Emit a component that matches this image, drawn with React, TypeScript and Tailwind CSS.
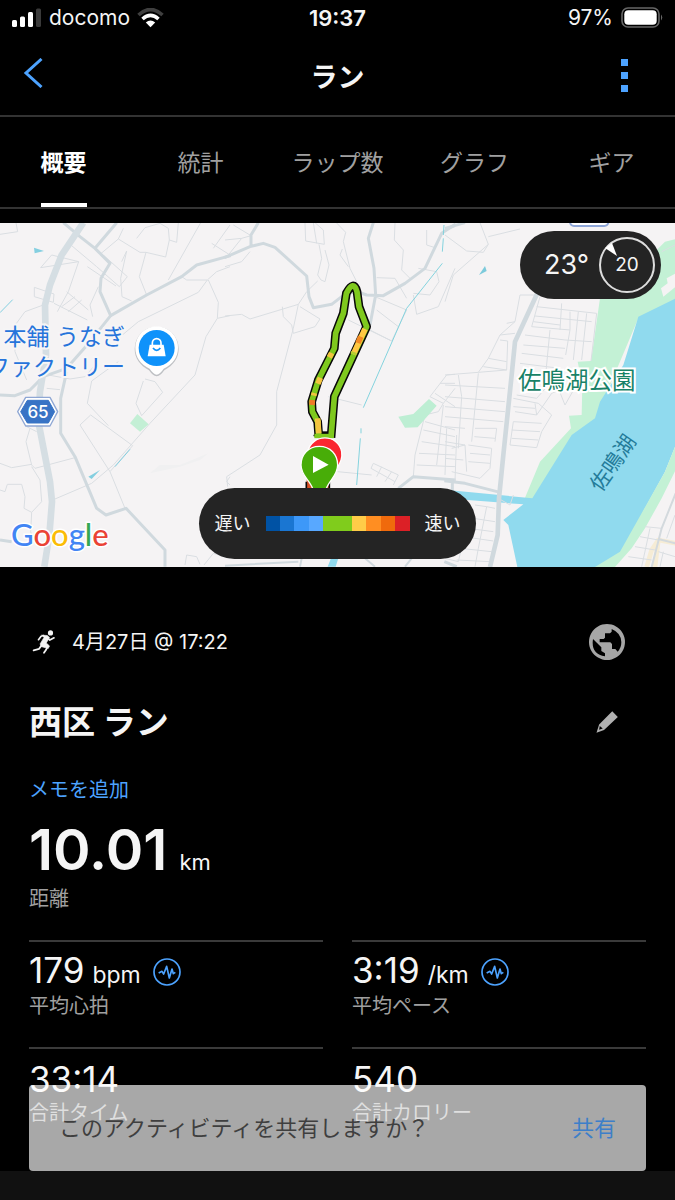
import React from "react";

const TABS = ["概要", "統計", "ラップ数", "グラフ", "ギア"];

const PACE_COLORS = [
  "bg-[#0052a4]",
  "bg-[#1a76d2]",
  "bg-[#3d98f8]",
  "bg-[#58a8ff]",
  "bg-[#80cc1c]",
  "bg-[#80cc1c]",
  "bg-[#ffcc48]",
  "bg-[#ff8e22]",
  "bg-[#f06a0c]",
  "bg-[#dc2026]",
];

function StatusBar() {
  return (
    <div className="grid h-9 grid-cols-3 items-center px-3 text-[21px] leading-6">
      <div className="flex items-center gap-[7px]">
        <svg className="h-5 w-[30px]" viewBox="0 0 30 20" aria-hidden="true">
          <rect x="0" y="12" width="5" height="7" rx="1.5" fill="#fff" />
          <rect x="8" y="8.500" width="5" height="10.500" rx="1.500" fill="#fff" />
          <rect x="16" y="4" width="5" height="15" rx="1.500" fill="#fff" />
          <rect x="24" y="0.500" width="5" height="18.500" rx="1.500" fill="#3a3a3a" />
        </svg>
        <span>docomo</span>
        <svg className="h-5 w-[27px]" viewBox="0 0 27 20" aria-hidden="true" fill="none">
          <path d="M1.500 7 Q13.500 -4 25.500 7" stroke="#3f3f3f" strokeWidth="3.600" />
          <path d="M5.500 11 Q13.500 3.800 21.500 11" stroke="#fff" strokeWidth="3.600" />
          <path d="M8.800 14.500 Q13.500 10.500 18.200 14.500 L13.500 19.300Z" fill="#fff" />
        </svg>
      </div>
      <div className="text-center text-[22px] font-semibold">19:37</div>
      <div className="flex items-center justify-end gap-2">
        <span>97%</span>
        <svg className="h-[22px] w-[42px]" viewBox="0 0 42 22" aria-hidden="true">
          <rect x="1" y="1" width="37" height="19" rx="6" fill="none" stroke="#666" strokeWidth="1.600" />
          <rect x="3.300" y="3.300" width="32.400" height="14.400" rx="4" fill="#fff" />
          <path d="M40 7.500 Q42.500 10.500 40 13.500Z" fill="#666" />
        </svg>
      </div>
    </div>
  );
}

function Header() {
  return (
    <header className="flex h-[81px] items-center justify-between border-b-2 border-[#333] px-[23px]">
      <button aria-label="戻る" className="flex h-10 w-10 items-start pt-[2px]">
        <svg className="h-[30px] w-5" viewBox="0 0 20 30" fill="none" aria-hidden="true">
          <path d="M18.500 1 L3 15 L18.500 29" stroke="#4da3ff" strokeWidth="3" />
        </svg>
      </button>
      <h1 className="pt-1 text-[27px] font-bold leading-8">ラン</h1>
      <button aria-label="メニュー" className="flex h-10 w-10 items-center justify-end pr-6">
        <svg className="h-[33px] w-[7px]" viewBox="0 0 7 33" aria-hidden="true" fill="#4da3ff">
          <rect width="7" height="7" />
          <rect y="13" width="7" height="7" />
          <rect y="26" width="7" height="7" />
        </svg>
      </button>
    </header>
  );
}

function Tabs() {
  return (
    <nav className="overflow-hidden border-b-2 border-[#333]" role="tablist">
      <div className="-mx-[5px] grid grid-cols-5">
        {TABS.map((t, i) => (
          <div key={t} className="flex justify-center">
            <button
              role="tab"
              aria-selected={i === 0}
              className={
                i === 0
                  ? "h-[90px] whitespace-nowrap border-b-4 border-[#fff] pt-[6px] text-[23px] font-bold text-white"
                  : "h-[90px] whitespace-nowrap border-b-4 border-transparent pt-[6px] text-[23px] text-[#a0a0a0]"
              }
            >
              {t}
            </button>
          </div>
        ))}
      </div>
    </nav>
  );
}

function MapWest() {
  return (
    <g transform="translate(0 -8) scale(0.33333)" fill="none" strokeLinejoin="round">
      <g stroke="#dadee2" strokeWidth="3">
        <path d="M0 58 L53 50 48 23 M215 92 L290 155 358 215 382 185 312 122 M236 140 L205 230 172 290 M236 140 L155 120 122 158 236 140 M262 155 L348 213 M300 118 L355 72 420 112 438 112 M355 72 L370 40 M365 140 L380 108 M380 108 L362 190 366 245 395 258 M438 112 L418 185 440 240 M438 112 L497 126 508 75 M410 70 L435 38 480 25 505 40 508 75 530 82 535 23 M602 23 L505 195 M545 185 L560 195 622 195 650 170 690 155 M625 195 L655 262 652 310 690 302 M652 310 L618 365 585 480 450 625 340 750 275 805 165 852 M622 195 L595 232 415 320 355 370 M355 440 L275 498 262 565 325 632" />
        <path d="M103 217 L162 237 160 262 103 245Z M162 265 L262 315 M200 230 L265 285 M225 245 L185 275 M245 255 L205 290 M295 215 L270 270 278 305 M130 270 L75 290 42 335 45 410 80 495 M145 480 L210 492 255 485 285 450 M140 520 L180 524 M90 640 L78 680 95 750 105 760 225 728 M110 650 L80 635 M0 745 L35 758 95 748 M0 825 L15 830 22 808 65 808 75 845 72 880 95 892 125 860 120 795 95 755 M95 892 L92 950 100 975 M240 630 L272 600 398 692 330 770 M240 630 L330 770 375 880 M435 492 L465 500 488 532 425 602 408 565 430 498 M640 100 L690 30 M635 85 L690 120 M555 1050 L560 1020 590 1025 600 1048 M612 1050 L640 1015 690 1030 M690 785 L680 800 690 810" />
      </g>
      <path d="M450 775 L480 750 540 750 625 715 600 735 540 755Z" fill="#f0f0f1" />
      <path d="M390 625 L412 597 446 628 420 650Z" fill="#c3efd5" />
      <g stroke="#d0d9de" strokeWidth="9">
        <path d="M190 23 L240 65 285 100 330 145 303 190 300 230 332 302 440 240 545 185 590 150 692 122" />
        <path d="M350 23 L285 100 M332 302 L270 380 200 460 130 485 90 525 45 542 0 540 M200 470 L182 550 182 655 225 725 265 820 290 880 318 900 378 880 495 1005 495 1055 M0 975 L35 980" />
      </g>
      <path d="M250 23 L185 120 150 210 135 270 138 420 120 530 115 620 150 800 156 860 148 960 133 1055" stroke="#d5dee3" strokeWidth="20" />
      <g fill="#84cfe0">
        <path d="M102 98 L132 108 104 115Z M265 785 L300 765 275 792Z" />
        <path d="M0 293 L38 254 M345 755 L390 703" stroke="#84cfe0" strokeWidth="3" />
      </g>
    </g>
  );
}

const ROUTE =
  "M277 668 L281 658 278 620 262 590 260 560 280 495 328 400 332 355 355 295 364 235 Q386 193 396 230 L402 275 425 335 328 545 318 668";

function MapCenter() {
  return (
    <g transform="translate(225 -8) scale(0.33333)" fill="none" strokeLinejoin="round">
      <g stroke="#dadee2" strokeWidth="3">
        <path d="M0 75 L50 70 78 62 25 30 M0 155 L50 140 75 110 M50 70 L10 120 M240 23 L242 78 298 88 295 45 270 23 M265 23 L275 85 M282 88 L290 130 278 180 288 195 300 200 312 150 300 105 M334 23 L362 52 355 80 375 160 395 200 M352 102 L345 120 370 155 M0 303 L50 298 75 312 220 268 205 340 155 530 155 630 105 720 5 785 8 815 M220 268 L245 230 278 198 M172 275 L175 305 200 330 205 355 270 335 285 312 225 275 M510 23 L508 75 535 105 530 165 555 190 M455 188 L510 190 545 250 M455 285 L520 335 M450 245 L545 285 M370 315 L500 378 M435 345 L500 378 545 285 M310 545 L410 570 M565 235 L615 240 642 200 635 170 580 160 M565 240 L575 298 640 275 690 160 M605 45 L605 90 630 98 655 50 690 35" />
        <path d="M338 770 L440 780 M438 760 L445 745 520 780 505 810 M438 760 L510 800 M470 755 L455 785 M500 770 L480 800 M690 478 L665 480 615 545 655 565 690 520 M645 505 L690 505 M630 535 L690 575 M655 565 L640 590 600 600 570 720 565 785 M600 620 L690 645 M595 645 L690 665 M590 680 L690 695 M582 715 L690 720 M575 750 L690 755 M655 570 L635 750 M665 640 L660 780" />
      </g>
      <g stroke="#d0d9de" strokeWidth="9">
        <path d="M-2 128 L75 95 115 85 150 97 245 183 252 245 265 278 320 268 350 245 390 228 425 240 475 242 540 205 600 160 650 55 692 27 M445 23 L430 70 447 160 452 240 435 330 M100 23 L78 60 78 95 M520 820 L565 785 692 795" />
        <path d="M0 1052 L220 1040 M230 1030 L225 1055 M420 1030 L450 1055 M540 1055 L560 1030" strokeWidth="6" />
      </g>
      <path d="M318 1030 L340 1030 332 1055 308 1055Z" fill="#90daee" />
      <path d="M657 30 L655 60 M655 70 L652 110 M652 145 L545 280 415 578 M408 640 L408 655 M406 670 L395 810" stroke="#84d3de" strokeWidth="3" />
      <path d="M520 605 L565 597 612 552 635 572 578 637 540 638Z" fill="#bdeed3" />
      <path d="M245 820 V790 H315 V820" fill="#d95026" />
      <path d="M244 800 V820 M313 800 V820" stroke="#080808" strokeWidth="5" />
      <path d={ROUTE} stroke="#080808" strokeWidth="26" />
      <path d="M285 653 H315" stroke="#080808" strokeWidth="8" />
      <path d={ROUTE} stroke="#7fc91e" strokeWidth="17" />
      <path d="M268 663 H326" stroke="#7fc91e" strokeWidth="13" />
      <g strokeWidth="17">
        <path d="M420 342 L385 418" stroke="#ffc843" />
        <path d="M407 365 L399 384" stroke="#f28a25" />
        <path d="M387 411 L384 418 M276 613 L280 625" stroke="#b7cf31" />
        <path d="M320 414 L313 427 M286 488 L279 506 M268 534 L266 542 M278 610 L281 655" stroke="#f3c440" />
        <path d="M262 555 L261 570" stroke="#ef7928" />
      </g>
      <path d="M248 710 C260 655 340 655 350 710 Q354 735 335 760 L280 760Z" fill="#fa2630" stroke="#fff" strokeWidth="4" />
      <path d="M283 694 C250 694 228 718 228 750 C228 782 254 795 263 821 H304 C312 796 338 782 338 750 C338 718 316 694 283 694Z" fill="#48ad08" stroke="#fff" strokeWidth="4" />
      <path d="M264 723 V774 L311 749Z" fill="#fff" />
    </g>
  );
}

function MapEast() {
  return (
    <g transform="translate(445 -8) scale(0.33333)" fill="none" strokeLinejoin="round">
      <path d="M660 80 L692 72 692 255 580 310 470 570 455 615 380 670 265 860 240 848 285 740 378 640 372 602 410 600 412 510 398 440 438 438 465 250 560 180Z" fill="#c3f1d5" />
      <path d="M692 175 L665 190 668 205 648 220 655 245 692 215Z" fill="#f5f3f4" />
      <path d="M692 250 L580 305 535 450 465 560 450 610 380 660 262 850 0 824 0 850 235 868 175 915 190 930 205 1000 217 1056 455 1056 530 1020 600 880 660 770 692 690Z" fill="#90daee" />
      <path d="M692 690 L660 770 525 1010 450 1056 510 1056 560 1000 600 940 650 850 692 765Z" fill="#c3f1d5" />
      <path d="M605 1056 L620 1005 640 975 M630 1056 L640 975 692 985" stroke="#f6ecd5" strokeWidth="14" />
      <g stroke="#dadee2" strokeWidth="3">
        <path d="M0 60 L65 108 115 112 130 88 105 23 M130 88 L25 180 0 260 M130 65 L225 42 M650 110 L690 90 M270 240 L225 240 210 320 185 325 M210 320 L165 360 130 430 100 472 0 480 M165 360 L210 355 M165 375 L188 378 185 465 100 472 M285 245 L260 335 375 345 M275 275 L455 295 M270 303 L440 320 M265 320 L345 330 M350 265 L345 345 M400 290 L385 435 M425 295 L410 435 M375 290 L375 345 362 420 M240 360 L360 375 M235 390 L360 400 M230 415 L355 430 M225 445 L345 460 M225 475 L330 485 M455 295 L438 438 M440 380 L360 375 M315 345 L300 500 M130 430 L185 440 M115 455 L185 465 M100 475 L80 680 M40 480 L50 545 40 700 M0 510 L180 520 M0 545 L180 560 M0 575 L180 590 M0 605 L175 620 M0 635 L60 640 M0 680 L60 690 M70 690 L140 700 135 760 105 790 20 770 M75 715 L135 720 M70 740 L135 745 M90 640 L155 640 150 680 M88 665 L150 670 M20 700 L60 690 65 770 M0 730 L55 735 M35 660 L30 800" />
        <path d="M205 550 L280 565 320 600 290 650 275 698 195 690 205 620 290 625 M200 645 L285 650 M200 670 L280 675 M210 590 L275 600 320 535 400 500 M215 540 L275 550 310 510 M205 575 L270 580 M275 600 L270 565 M340 520 L360 570 400 500 M90 870 L125 875 150 880 M125 875 L100 1000 90 1055 M85 910 L150 920 M70 940 L145 950 M55 965 L145 978 M45 1000 L140 1010 M35 1035 L135 1040 M0 1030 L40 1040 60 955 M160 850 L195 870 205 840 M600 935 L650 940 M585 965 L640 975 M570 995 L630 1005 M550 1025 L620 1035 M615 940 L590 1055 M690 900 L665 970 M655 1010 L645 1055 M640 1010 L690 1025" />
      </g>
      <path d="M277 235 L210 380 200 480 175 720 162 850 158 960 135 1056" stroke="#d0d9de" strokeWidth="14" />
      <path d="M-2 797 L60 805 165 832 M22 797 V825 M0 40 L60 23 M-2 1040 L35 1055" stroke="#d0d9de" strokeWidth="9" />
      <path d="M692 835 L650 940 620 1056 M640 972 L692 985" stroke="#d3d9dd" strokeWidth="6" />
      <path d="M102 180 L120 153 125 168Z" fill="#7ccadb" />
      <rect x="375" y="-10" width="115" height="43" rx="12" fill="#fff" stroke="#8ea6d8" strokeWidth="6" />
    </g>
  );
}

function MapLabels() {
  return (
    <g>
      <g fill="#2674db" stroke="#f6f5f6" strokeWidth="4" paintOrder="stroke" fontSize="23">
        <text x="125" y="122" textAnchor="end">本舗 うなぎ</text>
        <text x="125" y="152" textAnchor="end">ファクトリー</text>
      </g>
      <g fill="#188267" paintOrder="stroke" fontSize="24">
        <text x="518" y="166" stroke="#fff" strokeWidth="4" fontSize="23.500">佐鳴湖公園</text>
        <text transform="translate(601 270) rotate(-55)" fill="#247c9a" fontSize="21">佐鳴湖</text>
      </g>
      <g transform="translate(0 -8) scale(0.33333)">
        <path d="M470 484 Q458 482 447 466 C420 450 404 430 404 401 A66 66 0 0 1 536 401 C536 430 520 450 493 466 Q482 482 470 484Z" fill="#9a9ea3" opacity="0.600" />
        <path d="M470 479 Q460 478 449 461 C422 448 406 427 406 398 A64 64 0 0 1 534 398 C534 427 518 448 491 461 Q480 478 470 479Z" fill="#fff" />
        <circle cx="470" cy="399" r="54" fill="#0f92fa" />
        <path d="M449 389 H491 L497 424 H443Z" fill="#fff" />
        <path d="M457 391 V384 A13 13 0 0 1 483 384 V391" fill="none" stroke="#fff" strokeWidth="5" />
        <path d="M459 399 Q470 413 481 399" fill="none" stroke="#0f92fa" strokeWidth="5" />
        <path d="M77 547 H150 L173 590 150 633 H77 L53 590Z" fill="#fff" stroke="#8fa7d4" strokeWidth="4" strokeLinejoin="round" />
        <path d="M82 556 H145 L164 590 145 624 H82 L62 590Z" fill="#3873c5" stroke="#3873c5" strokeWidth="3" strokeLinejoin="round" />
      </g>
      <text x="38" y="195" textAnchor="middle" fill="#fff" fontSize="17" fontWeight="500">65</text>
      <text x="11" y="323" fontSize="31" fontWeight="500" stroke="#fff" strokeWidth="3" paintOrder="stroke" className="font-[Lato,sans-serif]">
        <tspan fill="#4285f4">G</tspan>
        <tspan fill="#ea4335">o</tspan>
        <tspan fill="#fbbc05">o</tspan>
        <tspan fill="#4285f4">g</tspan>
        <tspan fill="#34a853">l</tspan>
        <tspan fill="#ea4335">e</tspan>
      </text>
    </g>
  );
}

function RouteMap() {
  return (
    <section className="relative mt-[14px] h-[344px] overflow-hidden bg-[#f5f3f4]">
      <svg className="h-full w-full" viewBox="0 0 675 344" preserveAspectRatio="xMidYMid slice" role="img" aria-label="ルート">
        <MapWest />
        <MapCenter />
        <MapEast />
        <MapLabels />
      </svg>
      <div className="absolute right-[14px] top-2 flex h-[68px] w-[141px] items-center justify-between rounded-full bg-[#242424] pl-6 pr-[6px]">
        <span className="text-[27px] leading-8">23°</span>
        <div className="relative flex h-14 w-14 items-center justify-center rounded-full border-2 border-[#ddd] text-[19px]">
          <svg className="absolute left-1 top-1 h-4 w-4" viewBox="0 0 16 16" aria-hidden="true">
            <path d="M0 5 L7 0 L12 13Z" fill="#fff" />
          </svg>
          20
        </div>
      </div>
      <div className="absolute inset-x-0 top-[265px] flex justify-center">
        <div className="flex h-[71px] w-[277px] items-center justify-center gap-[15px] rounded-full bg-[#242424] text-[18px]">
          <span>遅い</span>
          <div className="flex h-[15px] w-36">
            {PACE_COLORS.map((c, i) => (
              <div key={i} className={`${c} flex-1`} />
            ))}
          </div>
          <span>速い</span>
        </div>
      </div>
    </section>
  );
}

function RunnerIcon() {
  return (
    <svg className="h-6 w-6" viewBox="95 89 72 74" fill="none" stroke="#f3f3f3" strokeLinejoin="round" strokeLinecap="round" aria-hidden="true">
      <circle cx="151" cy="98" r="8" fill="#f3f3f3" stroke="none" />
      <path d="M125 105 L141 106 148 112 138 129 148 138 144 146 122 140 119 132 131 112Z" fill="#f3f3f3" strokeWidth="2" />
      <path d="M130 106 L122 108 114 119 M142 113 L149 120 162 113" strokeWidth="5" />
      <path d="M142 139 L138 149 131 159 M122 138 L116 147 99 152" strokeWidth="5.500" />
    </svg>
  );
}

function GlobeIcon() {
  return (
    <svg className="h-9 w-9" viewBox="755 72 108 108" aria-hidden="true">
      <path
        fill="#a6a6a6"
        fillRule="evenodd"
        d="M809 72 A54 54 0 1 1 808.900 72Z M823 87 V95 L818 100 H803 V113 L799 117 H787 V127 H819 L824 132 V147 H834 L841 155 Q852 144 852 127 Q852 99 823 87Z M767 117 Q760 162 803 169 V160 L792 153 V142Z"
      />
    </svg>
  );
}

function PencilIcon() {
  return (
    <svg className="h-[22px] w-[22px]" viewBox="777 332 66 67" aria-hidden="true">
      <path fill="#b0b0b0" fillRule="evenodd" d="M826 333 L843 350 801 390 778 398 786 373Z M788 378 L786 389 797 385Z" />
    </svg>
  );
}

function PulseIcon() {
  return (
    <svg className="h-7 w-7" viewBox="457 109 84 84" fill="none" stroke="#4da3ff" aria-hidden="true">
      <circle cx="499" cy="151" r="39" strokeWidth="5" />
      <path d="M474 154 L484 149 489 157 498 134 506 169 514 142 518 156 524 152" strokeWidth="5" strokeLinejoin="round" />
    </svg>
  );
}

type MetricProps = { value: string; unit?: string; label: string; pulse?: boolean };

function Metric({ value, unit, label, pulse }: MetricProps) {
  return (
    <div className="flex h-[107px] flex-col border-t-2 border-[#3a3a3a] pt-2">
      <div className="flex h-11 items-center gap-3">
        <div className="flex items-baseline gap-2 leading-10">
          <span className="text-[35px]">{value}</span>
          {unit && <span className="text-[23px]">{unit}</span>}
        </div>
        {pulse && (
          <button aria-label={`${label}のグラフ`}>
            <PulseIcon />
          </button>
        )}
      </div>
      <div className="text-[20px] leading-6 text-[#a0a0a0]">{label}</div>
    </div>
  );
}

export default function App() {
  return (
    <div className="relative flex min-h-screen flex-col overflow-hidden bg-black font-[Inter,'Noto_Sans_CJK_JP',sans-serif] text-[#f5f5f5]" lang="ja">
      <StatusBar />
      <Header />
      <Tabs />
      <RouteMap />
      <main className="px-[29px] pt-[53px]">
        <div className="flex h-11 items-center justify-between pr-[21px]">
          <div className="flex items-center gap-4 pl-[3px] text-[20px] leading-6">
            <RunnerIcon />
            <span>4月27日 @ 17:22</span>
          </div>
          <button aria-label="公開設定">
            <GlobeIcon />
          </button>
        </div>
        <div className="mt-[34px] flex h-12 items-center justify-between pr-7">
          <h2 className="text-[33px] font-bold leading-10">西区 ラン</h2>
          <button aria-label="名前を編集">
            <PencilIcon />
          </button>
        </div>
        <a href="#memo" className="mt-8 block text-[20px] leading-6 text-[#4da3ff]">
          メモを追加
        </a>
        <div className="mt-4 flex h-[69px] items-baseline gap-3 leading-[64px]">
          <span className="text-[57px] font-semibold">10.01</span>
          <span className="text-[22px]">km</span>
        </div>
        <div className="text-[20px] leading-6 text-[#a0a0a0]">距離</div>
        <div className="mt-[29px] grid grid-cols-2 gap-x-[29px]">
          <Metric value="179" unit="bpm" label="平均心拍" pulse />
          <Metric value="3:19" unit="/km" label="平均ペース" pulse />
          <Metric value="33:14" label="合計タイム" />
          <Metric value="540" label="合計カロリー" />
        </div>
      </main>
      <div className="mt-[17px] min-h-7 flex-1 bg-[#111]" />
      <div className="absolute inset-x-[29px] bottom-[29px] flex h-[86px] items-center justify-between rounded bg-white/66 px-[30px] text-[22px] leading-8">
        <span className="text-[#3f3f3f]">このアクティビティを共有しますか？</span>
        <button className="text-[#3d7fc9]">共有</button>
      </div>
    </div>
  );
}
